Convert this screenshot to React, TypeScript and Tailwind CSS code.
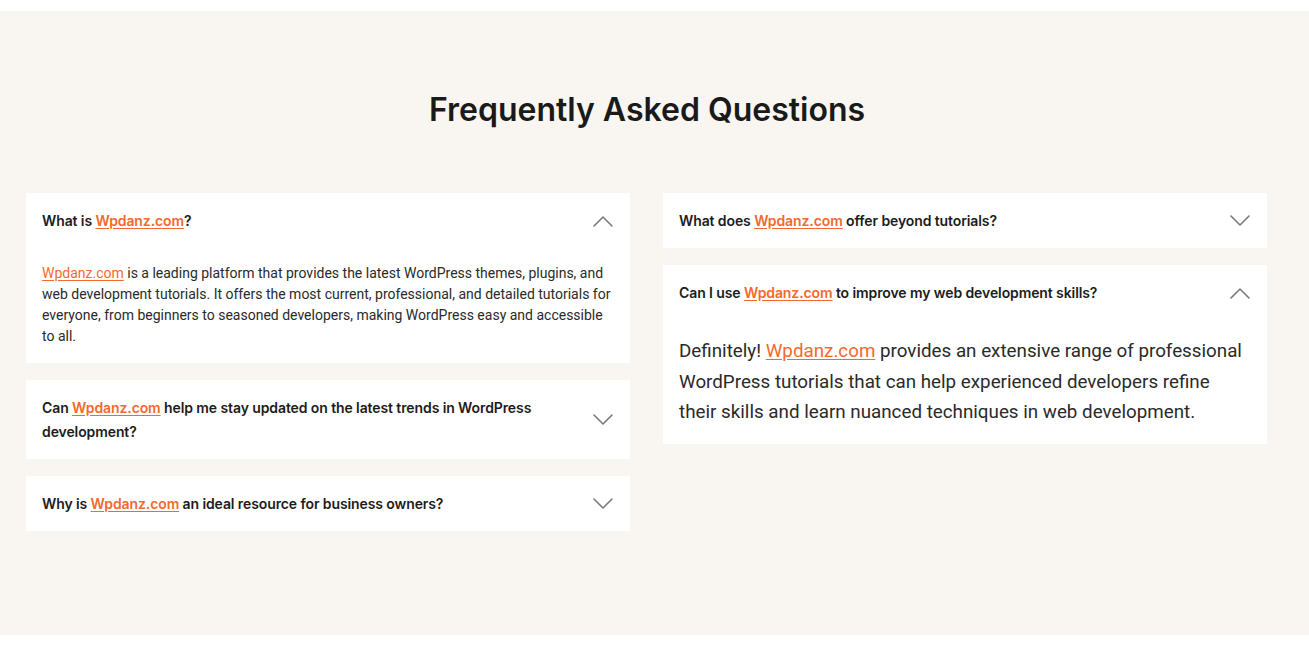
type Faq = {
  before: string;
  after: string;
  answer?: { before: string; after: string };
  big?: boolean;
};

const left: Faq[] = [
  {
    before: "What is ",
    after: "?",
    answer: {
      before: "",
      after:
        " is a leading platform that provides the latest WordPress themes, plugins, and web development tutorials. It offers the most current, professional, and detailed tutorials for everyone, from beginners to seasoned developers, making WordPress easy and accessible to all.",
    },
  },
  {
    before: "Can ",
    after: " help me stay updated on the latest trends in WordPress development?",
  },
  { before: "Why is ", after: " an ideal resource for business owners?" },
];

const right: Faq[] = [
  { before: "What does ", after: " offer beyond tutorials?" },
  {
    before: "Can I use ",
    after: " to improve my web development skills?",
    big: true,
    answer: {
      before: "Definitely! ",
      after:
        " provides an extensive range of professional WordPress tutorials that can help experienced developers refine their skills and learn nuanced techniques in web development.",
    },
  },
];

function Chevron({ up }: { up?: boolean }) {
  return (
    <svg width="20" height="12" viewBox="0 0 20 12" fill="none" className="shrink-0">
      <polyline
        points={up ? "1,11 10,2 19,11" : "1,1 10,10 19,1"}
        stroke="#7a7a7a"
        strokeWidth="1.6"
        strokeLinecap="round"
        strokeLinejoin="round"
      />
    </svg>
  );
}

function Item({ item }: { item: Faq }) {
  const open = !!item.answer;
  return (
    <div className="bg-white">
      <div className="flex items-center justify-between gap-6 pl-4 pr-[17px] pt-[16px] pb-[15px]">
        <h3 className="font-['Inter',sans-serif] text-[14px] leading-6 font-semibold text-[#1c1c1c] tracking-[-0.1px]">
          {item.before}
          <span className="text-[#f26a2b] underline underline-offset-2">Wpdanz.com</span>
          {item.after}
        </h3>
        <Chevron up={open} />
      </div>
      {item.answer && (
        <p
          className={
            item.big
              ? "pl-4 pr-[19px] pt-4 pb-4 font-['Roboto',sans-serif] text-[18.8px] leading-[30.5px] text-[#2a2a2a]"
              : "pl-4 pr-[12px] pt-[15px] pb-4 font-['Roboto',sans-serif] text-[14px] leading-[21px] text-[#2a2a2a]"
          }
        >
          {item.answer.before}
          <span className="text-[#f26a2b] underline underline-offset-2">Wpdanz.com</span>
          {item.answer.after}
        </p>
      )}
    </div>
  );
}

export default function App() {
  return (
    <div className="min-h-[658px] bg-white pt-[11px] pb-[23px]">
      <section className="bg-[#f9f6f1] h-[624px] pl-[26px] pt-[79px]">
        <h2 className="pr-[41px] text-center font-['Inter',sans-serif] text-[32px] leading-10 font-semibold text-[#1a1a1a]">
          Frequently Asked Questions
        </h2>
        <div className="mt-[63px] grid grid-cols-[604px_604px] gap-x-[33px] items-start">
          <div className="flex flex-col gap-[17px]">
            {left.map((f, i) => (
              <Item key={i} item={f} />
            ))}
          </div>
          <div className="flex flex-col gap-[17px]">
            {right.map((f, i) => (
              <Item key={i} item={f} />
            ))}
          </div>
        </div>
      </section>
    </div>
  );
}
